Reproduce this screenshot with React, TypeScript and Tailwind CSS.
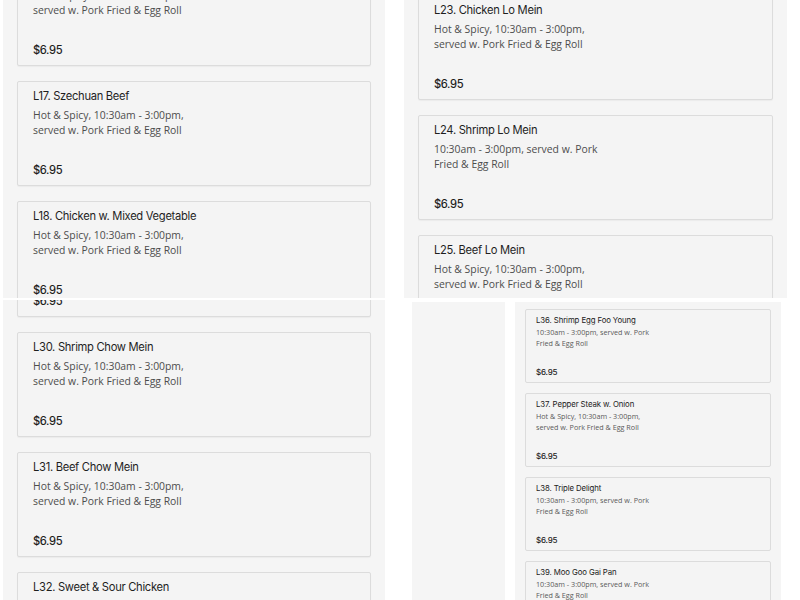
import React from "react";

type Item = { name: string; desc: string[]; price: string };

const heading = { fontFamily: '"Inter", "Noto Sans", sans-serif' };
const body = { fontFamily: '"Open Sans", sans-serif' };

const CardLg = ({ item, className = "" }: { item: Item; className?: string }) => (
  <div className={`h-[105px] shrink-0 rounded-[2px] border border-[#dcdcdc] bg-[#f4f4f4] pl-[15px] pt-[6px] shadow-[0_1px_1px_rgba(0,0,0,0.04)] ${className}`}>
    <div className="text-[11.2px] leading-[16px] tracking-[-0.3px] text-[#1f1f1f]" style={heading}>
      {item.name}
    </div>
    <div className="mt-[4px] text-[10.4px] leading-[15px] text-[#4d4d4d]" style={body}>
      {item.desc.map((d) => (
        <div key={d}>{d}</div>
      ))}
    </div>
    <div className="mt-[24px] text-[11.2px] font-medium leading-[16px] tracking-[-0.4px] text-[#1f1f1f]" style={heading}>
      {item.price}
    </div>
  </div>
);

const CardSm = ({ item, className = "" }: { item: Item; className?: string }) => (
  <div className={`h-[74px] shrink-0 rounded-[2px] border border-[#dcdcdc] bg-[#f4f4f4] pl-[10px] pt-[4px] ${className}`}>
    <div className="text-[7.8px] leading-[12px] tracking-[-0.1px] text-[#222]" style={heading}>
      {item.name}
    </div>
    <div className="mt-[1px] text-[7.2px] leading-[11px] text-[#5a5a5a]" style={body}>
      {item.desc.map((d) => (
        <div key={d}>{d}</div>
      ))}
    </div>
    <div className="mt-[17px] text-[8px] font-medium leading-[12px] tracking-[-0.2px] text-[#222]" style={heading}>
      {item.price}
    </div>
  </div>
);

const spicy = ["Hot & Spicy, 10:30am - 3:00pm,", "served w. Pork Fried & Egg Roll"];
const plain = ["10:30am - 3:00pm, served w. Pork", "Fried & Egg Roll"];

const topLeft: Item[] = [
  { name: "L16. Chicken w. Broccoli", desc: spicy, price: "$6.95" },
  { name: "L17. Szechuan Beef", desc: spicy, price: "$6.95" },
  { name: "L18. Chicken w. Mixed Vegetable", desc: spicy, price: "$6.95" },
];

const topRight: Item[] = [
  { name: "L23. Chicken Lo Mein", desc: spicy, price: "$6.95" },
  { name: "L24. Shrimp Lo Mein", desc: plain, price: "$6.95" },
  { name: "L25. Beef Lo Mein", desc: spicy, price: "$6.95" },
];

const bottomLeft: Item[] = [
  { name: "L29. Chicken Chow Mein", desc: spicy, price: "$6.95" },
  { name: "L30. Shrimp Chow Mein", desc: spicy, price: "$6.95" },
  { name: "L31. Beef Chow Mein", desc: spicy, price: "$6.95" },
  { name: "L32. Sweet & Sour Chicken", desc: spicy, price: "$6.95" },
];

const bottomRight: Item[] = [
  { name: "L36. Shrimp Egg Foo Young", desc: plain, price: "$6.95" },
  { name: "L37. Pepper Steak w. Onion", desc: spicy, price: "$6.95" },
  { name: "L38. Triple Delight", desc: plain, price: "$6.95" },
  { name: "L39. Moo Goo Gai Pan", desc: plain, price: "$6.95" },
];

export default function App() {
  return (
    <div className="flex h-[600px] w-[800px] flex-col overflow-hidden bg-white">
      {/* top row */}
      <div className="flex h-[298px] shrink-0">
        <div className="ml-[3px] flex w-[382px] flex-col gap-[15px] overflow-hidden bg-[#f5f5f5] px-[14px]">
          {topLeft.map((it, i) => (
            <CardLg key={it.name} item={it} className={i === 0 ? "mt-[-39px]" : ""} />
          ))}
        </div>
        <div className="ml-[19px] flex w-[383px] flex-col gap-[15px] overflow-hidden bg-[#f5f5f5] px-[14px]">
          {topRight.map((it, i) => (
            <CardLg key={it.name} item={it} className={i === 0 ? "mt-[-5px]" : ""} />
          ))}
        </div>
      </div>

      {/* bottom row */}
      <div className="mt-[2px] flex h-[300px] shrink-0">
        <div className="ml-[3px] flex w-[382px] flex-col gap-[15px] overflow-hidden bg-[#f5f5f5] px-[14px]">
          {bottomLeft.map((it, i) => (
            <CardLg key={it.name} item={it} className={i === 0 ? "mt-[-88px]" : ""} />
          ))}
        </div>
        <div className="ml-[27px] mt-[2px] w-[93px] bg-[#f5f5f5]" />
        <div className="ml-[10px] mt-[2px] flex w-[266px] flex-col gap-[10px] overflow-hidden bg-[#f5f5f5] px-[10px] pt-[7px]">
          {bottomRight.map((it) => (
            <CardSm key={it.name} item={it} />
          ))}
        </div>
      </div>
    </div>
  );
}
